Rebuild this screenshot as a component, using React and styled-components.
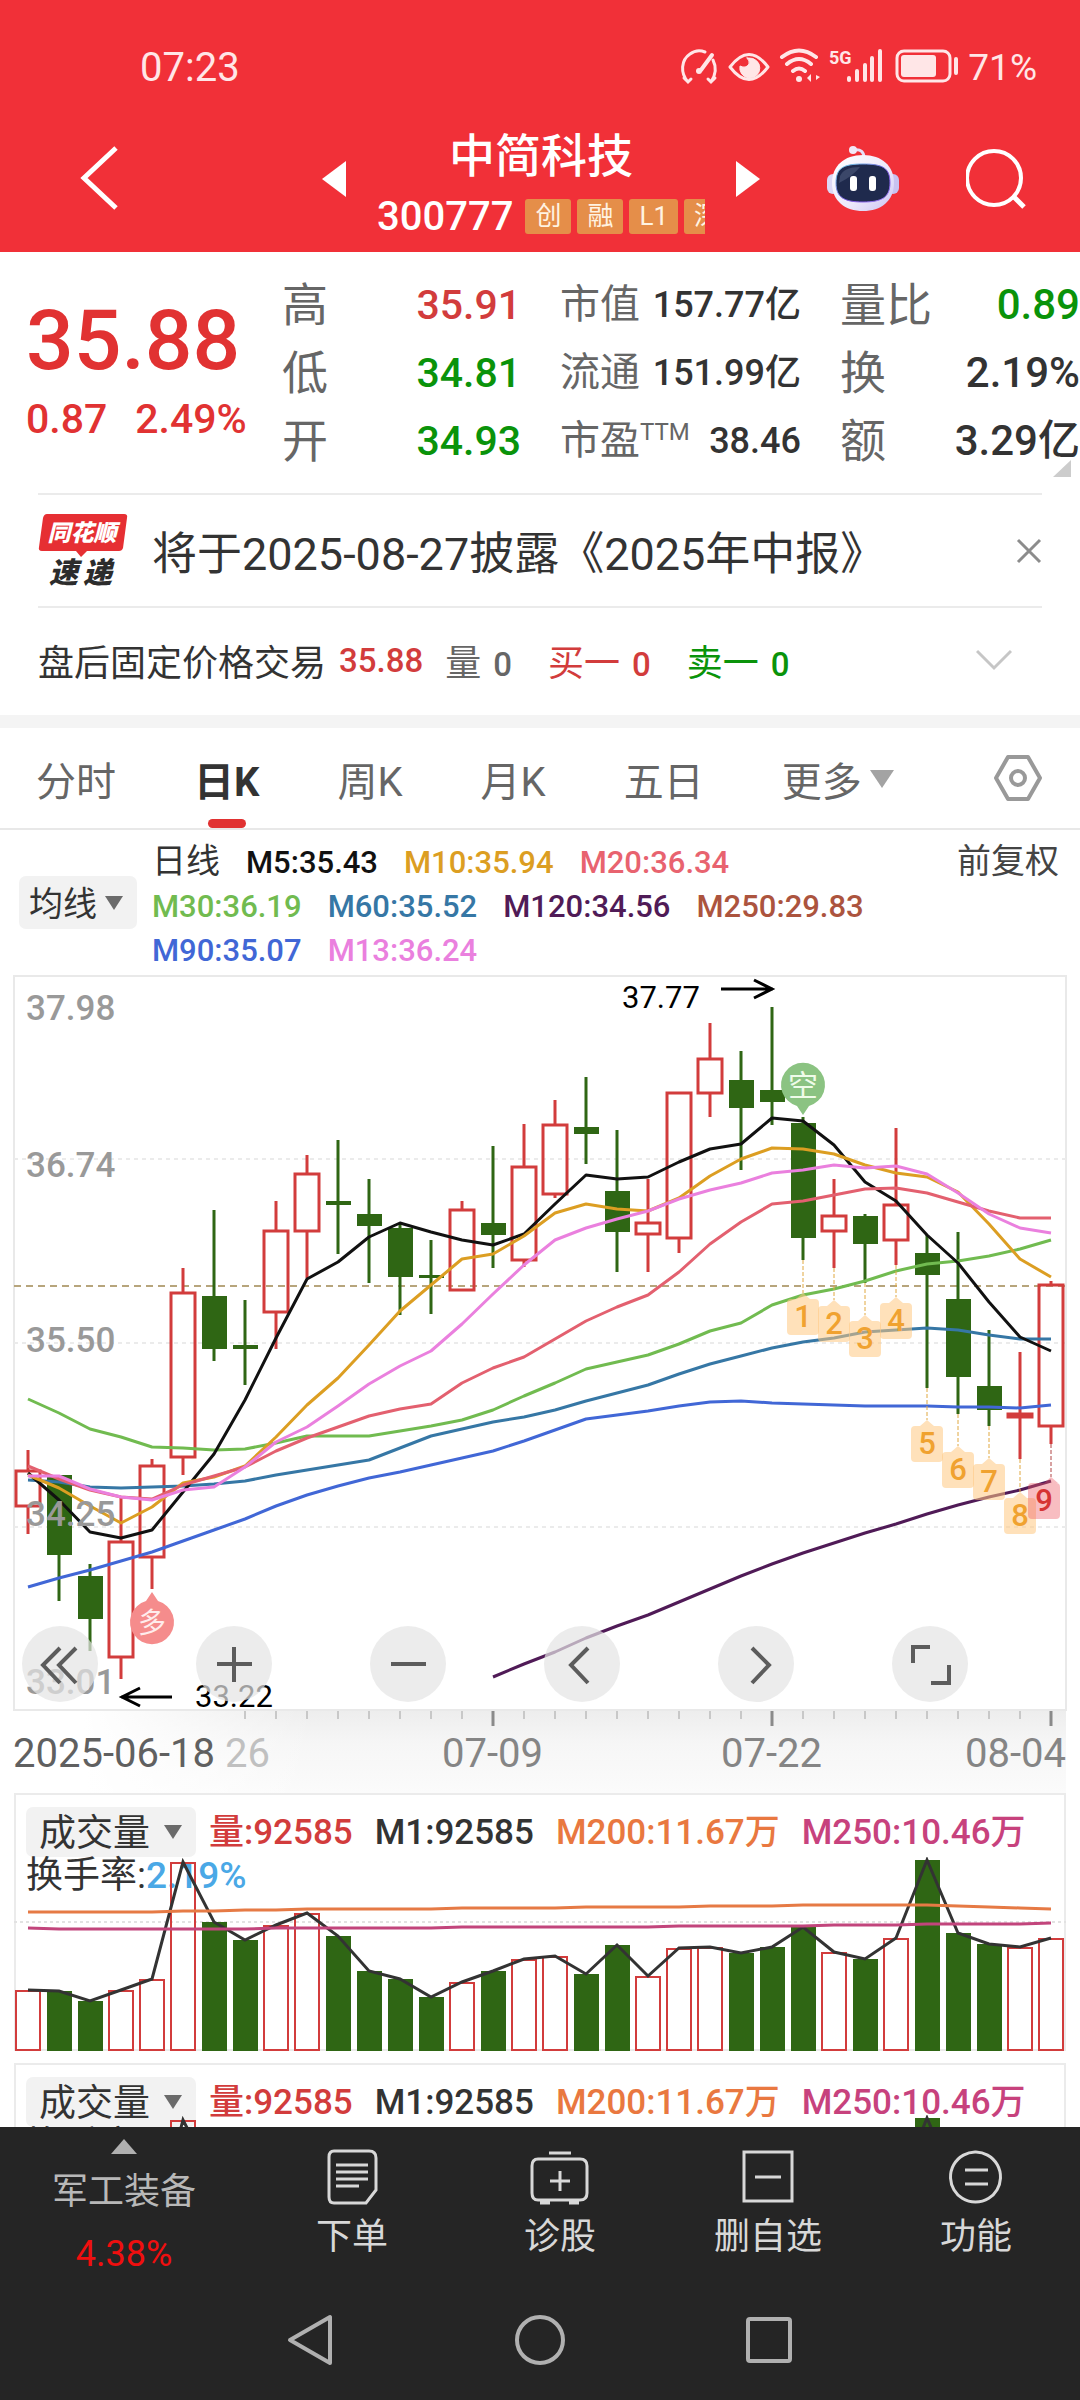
import React, { useState } from "react";

import styled, { createGlobalStyle, css } from "styled-components";

const GlobalStyle = createGlobalStyle`
  * {
    box-sizing: border-box;
  }
  body {
    margin: 0;
    background: #fff;
    color: #333;
    font-family: Roboto, "Noto Sans CJK SC", sans-serif;
  }
  button, select {
    border: 0;
    padding: 0;
    margin: 0;
    background: none;
    color: inherit;
    font: inherit;
    cursor: pointer;
  }
  dl, dd, dt, p, h1, ul {
    margin: 0;
    padding: 0;
    font-weight: inherit;
  }
  svg {
    display: block;
  }
`;

const RED = "#e13232";
const GREEN = "#0a930a";
const UP = "#d23c3c";
const DOWN = "#2f6614";

const Screen = styled.div`
  display: flex;
  flex-direction: column;
  height: 100vh;
  overflow: hidden;
`;

const Header = styled.header`
  flex: none;
  background: #f13038;
  color: #fff;
`;

const StatusBar = styled.div`
  display: flex;
  justify-content: space-between;
  align-items: center;
  height: 112px;
  padding: 22px 43px 0 140px;
  color: #ffe6e7;
  font-size: 40px;
`;

const StatusIcons = styled.div`
  display: flex;
  align-items: center;
  gap: 8px;
  font-size: 37px;
`;

const TitleBar = styled.div`
  display: flex;
  align-items: center;
  gap: 67px;
  height: 140px;
  padding: 0 54px 6px 80px;
`;

const Switcher = styled.div`
  display: flex;
  align-items: center;
  gap: 31px;
  margin-left: auto;
`;

const Stock = styled.div`
  width: 328px;
  padding-top: 12px;
  overflow: hidden;
  h1 {
    font-size: 46px;
    font-weight: 500;
    line-height: 54px;
    margin-bottom: 8px;
    text-align: center;
  }
`;

const StockCode = styled.div`
  display: flex;
  align-items: center;
  gap: 6px;
  height: 50px;
  font-size: 40px;
  font-weight: 500;
  span {
    margin-right: 6px;
  }
`;

const Tag = styled.b`
  flex: none;
  padding: 0 10px;
  border-radius: 3px;
  background: #e58e49;
  color: #fff3e2;
  font-size: 26px;
  font-weight: 400;
  line-height: 35px;
`;

const Content = styled.main`
  flex: 1;
  min-height: 0;
  overflow: hidden;
`;

const Quote = styled.section`
  position: relative;
  display: grid;
  grid-template-columns: minmax(0, 217fr) 239fr 241fr 240fr;
  column-gap: 39px;
  padding: 19px 0 18px 26px;
  white-space: nowrap;
`;

const Price = styled.div`
  padding-top: 24px;
  color: ${RED};
  font-weight: 500;
  strong {
    display: block;
    font-size: 84px;
    font-weight: 500;
    line-height: 92px;
    margin-bottom: 4px;
  }
  p {
    display: flex;
    gap: 28px;
    font-size: 41px;
    line-height: 56px;
  }
`;

const Stats = styled.dl`
  font-size: ${(p) => p.$size}px;
  div {
    display: flex;
    justify-content: space-between;
    line-height: 68px;
  }
  dt {
    color: #666;
    font-size: ${(p) => (p.$small ? 40 : 46)}px;
  }
  dd {
    font-weight: 500;
  }
  sup {
    font-size: 24px;
    line-height: 24px;
  }
`;

const Corner = styled.i`
  position: absolute;
  right: 9px;
  bottom: 16px;
  border-left: 18px solid transparent;
  border-bottom: 17px solid #ccc;
`;

const News = styled.section`
  display: flex;
  align-items: center;
  height: 115px;
  margin: 0 38px;
  border: solid #ebebeb;
  border-width: 2px 0;
  font-size: 45px;
  p {
    flex: 1;
    padding-left: 24px;
    white-space: nowrap;
  }
`;

const AfterHours = styled.section`
  display: flex;
  align-items: center;
  height: 107px;
  padding: 0 68px 3px 38px;
  font-size: 36px;
  button {
    margin-left: auto;
  }
`;

const Deal = styled.span`
  color: ${(p) => p.$color};
  margin-left: ${(p) => p.$gap}px;
  word-break: keep-all;
  b {
    font-size: 33px;
    font-weight: 500;
    margin-left: ${(p) => (p.$bare ? 0 : 12)}px;
  }
`;

const Divider = styled.div`
  height: 13px;
  background: #f4f4f4;
`;

const Tabs = styled.nav`
  display: flex;
  align-items: center;
  gap: 78px;
  height: 102px;
  padding: 0 38px 0 36px;
  border-bottom: 2px solid #e8e8e8;
`;

const Tab = styled.button`
  position: relative;
  display: flex;
  align-items: center;
  gap: 8px;
  height: 100%;
  padding-top: 2px;
  color: #666;
  font-size: 40px;
  ${(p) =>
    p.$active &&
    css`
      color: #333;
      font-weight: 700;
      &::after {
        content: "";
        position: absolute;
        left: 50%;
        bottom: 0;
        width: 38px;
        height: 9px;
        margin-left: -19px;
        border-radius: 5px;
        background: ${RED};
      }
    `}
`;

const SettingsButton = styled.button`
  margin-left: auto;
`;

const Averages = styled.section`
  display: flex;
  align-items: center;
  padding: 9px 21px 3px 19px;
  font-size: 34px;
  label {
    margin-bottom: 7px;
  }
`;

const AverageList = styled.ul`
  flex: 1;
  display: flex;
  flex-wrap: wrap;
  align-items: baseline;
  column-gap: 26px;
  padding: 0 74px 0 15px;
  font-size: 31px;
  line-height: 44px;
  list-style: none;
  li:first-child {
    font-size: 34px;
    font-weight: 400;
  }
`;

const Legend = styled.li`
  color: ${(p) => p.$color};
  font-weight: 500;
`;

const Adjust = styled.button`
  align-self: flex-start;
  color: #444;
  line-height: 44px;
`;

const Picker = styled.label`
  position: relative;
  display: block;
  flex: none;
  width: ${(p) => p.$width}px;
  border-radius: 7px;
  background: #f2f2f2;
  select {
    display: block;
    width: 100%;
    height: ${(p) => p.$height}px;
    padding: 2px 0 0 ${(p) => p.$pad}px;
    appearance: none;
    outline: none;
    font-size: ${(p) => p.$size}px;
  }
  svg {
    position: absolute;
    right: 14px;
    top: 50%;
    margin-top: -7px;
    pointer-events: none;
  }
`;

const ChartArea = styled.section`
  position: relative;
  padding: 0 14px;
  > svg {
    width: 100%;
    height: auto;
    overflow: visible;
  }
`;

const ChartTools = styled.div`
  position: absolute;
  top: 650px;
  left: 22px;
  display: flex;
  gap: 98px;
`;

const RoundButton = styled.button`
  width: 76px;
  height: 76px;
  border-radius: 50%;
  background: rgba(228, 228, 228, 0.7);
`;

const Axis = styled.div`
  margin: 0 14px;
  background: linear-gradient(90deg, #fff 70px, rgba(255, 255, 255, 0) 300px),
    linear-gradient(#ededed, #f6f6f6 40%, #fbfbfb);
  svg {
    width: 100%;
    height: auto;
  }
`;

const VolumePanel = styled.section`
  margin: 0 14px 12px;
  border: 2px solid #ebebeb;
  border-bottom: 0;
`;

const VolumeHead = styled.div`
  display: flex;
  align-items: center;
  padding: 12px 10px 0;
  ul {
    display: flex;
    align-items: baseline;
    gap: 22px;
    padding: 2px 0 0 13px;
    list-style: none;
    font-size: 35px;
    line-height: 48px;
    white-space: nowrap;
  }
`;

const VolumePlot = styled.div`
  position: relative;
  margin: ${(p) => (p.$tight ? -12 : 0)}px -2px 0;
  > svg {
    position: relative;
    width: 100%;
    height: auto;
  }
`;

const Turnover = styled.p`
  position: absolute;
  top: ${(p) => (p.$tight ? 9 : -3)}px;
  left: 12px;
  font-size: 37px;
  line-height: 44px;
  span {
    color: #4aa8e6;
    font-weight: 500;
  }
`;

const BottomBar = styled.footer`
  flex: none;
  background: #252525;
  color: #d8d8d8;
  font-size: 36px;
`;

const Actions = styled.div`
  display: grid;
  grid-template-columns: 248fr 208fr 208fr 208fr 208fr;
  height: 153px;
`;

const Sector = styled.button`
  display: flex;
  flex-direction: column;
  align-items: center;
  padding-top: 12px;
  color: #b8b8b8;
  font-size: 36px;
  line-height: 62px;
  svg {
    margin-bottom: 7px;
  }
  span + span {
    color: #f00f0f;
  }
`;

const Action = styled.button`
  display: flex;
  flex-direction: column;
  align-items: center;
  gap: 10px;
  padding-top: 22px;
  line-height: 44px;
`;

const SystemNav = styled.div`
  display: flex;
  justify-content: center;
  align-items: center;
  gap: 181px;
  height: 120px;
  padding-right: 2px;
`;

// y offsets from the top of the plot: up?, high, body top, body bottom, low
const candles = [
  [1, 474, 494, 531, 558], [0, 499, 499, 579, 625], [0, 588, 600, 643, 675],
  [1, 522, 565, 682, 703], [1, 483, 489, 582, 613], [1, 292, 316, 482, 499],
  [0, 234, 320, 373, 385], [0, 324, 369, 373, 409], [1, 225, 254, 337, 373],
  [1, 179, 197, 256, 302], [0, 164, 225, 229, 278], [0, 203, 238, 250, 307],
  [0, 247, 252, 301, 339], [0, 264, 299, 302, 338], [1, 225, 233, 315, 315],
  [0, 170, 247, 259, 292], [1, 148, 190, 285, 291], [1, 124, 148, 219, 222],
  [0, 101, 151, 158, 188], [0, 154, 215, 256, 296], [1, 203, 246, 259, 296],
  [1, 116, 116, 263, 277], [1, 47, 82, 118, 141], [0, 75, 104, 132, 194],
  [0, 31, 114, 126, 149], [0, 141, 147, 262, 284], [1, 203, 239, 256, 292],
  [0, 238, 240, 268, 307], [1, 152, 228, 265, 289], [0, 259, 277, 299, 412],
  [0, 256, 323, 401, 438], [0, 354, 410, 434, 450], [1, 376, 437, 442, 483],
  [1, 305, 308, 451, 468],
];

const averages = [
  { color: "#71bb50", y: [423, 437, 453, 461, 471, 472, 474, 473, 467, 460, 460, 460, 455, 450, 444, 434, 420, 407, 393, 386, 379, 368, 355, 347, 329, 319, 313, 305, 295, 288, 285, 280, 273, 264] },
  { color: "#3677a5", y: [504, 506, 511, 512, 511, 510, 508, 505, 499, 494, 489, 484, 472, 460, 453, 446, 441, 434, 425, 417, 409, 398, 388, 380, 372, 366, 362, 356, 354, 352, 354, 359, 363, 363] },
  { color: "#111", y: [497, 524, 556, 562, 554, 516, 478, 424, 362, 303, 286, 261, 247, 256, 264, 269, 258, 228, 199, 203, 201, 186, 173, 168, 142, 145, 169, 206, 225, 259, 287, 326, 361, 375] },
  { color: "#dc9e22", y: [499, 512, 530, 547, 531, 507, 501, 490, 461, 429, 402, 369, 335, 309, 283, 278, 260, 237, 228, 233, 235, 222, 200, 183, 172, 173, 178, 189, 197, 201, 216, 248, 283, 301] },
  { color: "#e3606f", y: [490, 503, 514, 521, 523, 509, 500, 491, 475, 462, 451, 440, 433, 428, 407, 392, 381, 363, 345, 331, 319, 296, 268, 246, 228, 225, 219, 213, 212, 217, 226, 235, 242, 242] },
  { color: "#4167d6", y: [611, 602, 594, 585, 576, 565, 554, 543, 530, 519, 510, 502, 496, 489, 482, 475, 465, 454, 443, 439, 435, 430, 426, 425, 427, 428, 429, 430, 430, 430, 431, 431, 432, 429] },
  { color: "#ea80de", y: [500, 500, 513, 521, 524, 514, 511, 491, 466, 451, 430, 408, 390, 375, 348, 318, 289, 264, 252, 243, 235, 223, 214, 207, 197, 194, 189, 192, 190, 198, 217, 238, 252, 257] },
  { color: "#501b57", from: 15, y: [701, 688, 676, 662, 650, 639, 626, 613, 600, 588, 577, 567, 557, 548, 538, 529, 521, 514, 505] },
];

const priceLabels = [
  ["37.98", 44],
  ["36.74", 201],
  ["35.50", 376],
  ["34.25", 550],
  ["33.01", 718],
];

const counts = [
  [25, 317], [26, 324], [27, 339], [28, 321], [29, 444], [30, 470], [31, 482], [32, 516], [33, 501],
];

const volumes = [
  133, 134, 144, 133, 122, 5, 65, 83, 68, 56, 79, 114, 122, 140, 125, 114, 102,
  99, 117, 88, 119, 91, 90, 96, 90, 70, 95, 102, 81, 3, 76, 87, 90, 81,
];
const volume200 = [
  55, 55, 55, 55, 55, 54, 54, 53, 53, 52, 52, 52, 52, 52, 51, 51, 51, 51, 50,
  50, 50, 50, 49, 49, 49, 48, 48, 48, 48, 48, 49, 50, 51, 52,
];
const volume250 = [
  71, 72, 72, 72, 72, 72, 72, 72, 71, 71, 71, 71, 71, 71, 70, 70, 70, 70, 70,
  70, 70, 69, 69, 69, 69, 69, 68, 68, 68, 67, 67, 67, 67, 66,
];

const xAt = (i) => 14 + i * 31;
const toPoints = (ys, from = 0) =>
  ys.map((y, i) => `${xAt(i + from)},${y}`).join(" ");

const Candle = ({ i, data: [up, high, top, bottom, low] }) => {
  const x = xAt(i);
  const color = up ? UP : DOWN;
  return (
    <g stroke={color} strokeWidth="3" fill="none">
      <path d={`M${x} ${high}V${top}M${x} ${bottom}V${low}`} />
      {up ? (
        <rect x={x - 12} y={top + 1} width="24" height={Math.max(bottom - top - 2, 2)} />
      ) : (
        <rect x={x - 12} y={top} width="25" height={bottom - top} fill={color} stroke="none" />
      )}
    </g>
  );
};

const CountMark = ({ i, tip, n }) => {
  const last = n === 9;
  const x = last ? xAt(i) - 7 : xAt(i);
  const color = last ? "#d63434" : "#f0a230";
  return (
    <g>
      <path d={`M${xAt(i)} ${candles[i][4]}V${tip}`} stroke={last ? "#b04444" : "#e0a840"} strokeDasharray="4 2" />
      <path
        d={`M${xAt(i) - 7} ${tip + 6}l7 -6l7 6H${x + 12}q4 0 4 4v28q0 4 -4 4H${x - 12}q-4 0 -4 -4v-28q0 -4 4 -4z`}
        fill={last ? "rgba(238,90,100,0.4)" : "rgba(255,200,130,0.55)"}
      />
      <text x={x} y={tip + 34} textAnchor="middle" fontSize="31" fontWeight="500" fill={color}>
        {n}
      </text>
    </g>
  );
};

const CandleChart = () => (
  <svg viewBox="0 0 1052 734" role="img" aria-label="日K线">
    <rect x="0" y="0" width="1052" height="734" fill="none" stroke="#e9e9e9" strokeWidth="2" />
    <path d="M0 183H1052M0 367H1052M0 551H1052" stroke="#ebebeb" strokeWidth="2" strokeDasharray="4 4" />
    <path d="M0 310H1052" stroke="#b7a57c" strokeWidth="2" strokeDasharray="7 5" />
    {candles.map((data, i) => (
      <Candle key={i} i={i} data={data} />
    ))}
    {averages.map((line) => (
      <polyline
        key={line.color}
        points={toPoints(line.y, line.from)}
        fill="none"
        stroke={line.color}
        strokeWidth="3"
        strokeLinejoin="round"
      />
    ))}
    {priceLabels.map(([text, y]) => (
      <text key={text} x="12" y={y} fontSize="35" fontWeight="500" fill="#999">
        {text}
      </text>
    ))}
    <g fontSize="31" fill="#000">
      <text x="608" y="32">37.77</text>
      <text x="181" y="731">33.22</text>
    </g>
    <path
      d="M707 13H759M740 4L758 13L740 22M158 721H107M126 712L108 721L126 730"
      fill="none"
      stroke="#000"
      strokeWidth="3"
    />
    {counts.map(([i, tip], n) => (
      <CountMark key={i} i={i} tip={tip} n={n + 1} />
    ))}
    <path d="M789 139L783 130A22 22 0 1 1 795 130Z" fill="#8bc382" />
    <text x="789" y="120" textAnchor="middle" fontSize="30" fill="#effbe9">空</text>
    <path d="M138 616L132 625A22 22 0 1 0 144 625Z" fill="#f58c8c" />
    <text x="138" y="657" textAnchor="middle" fontSize="28" fill="#ffecec">多</text>
  </svg>
);

const DateAxis = () => (
  <svg viewBox="0 0 1052 83" fontSize="40" fill="#858585">
    {candles.map((_, i) => {
      if (i < 7) return null;
      const major = i % 9 === 6;
      return (
        <path
          key={i}
          d={`M${xAt(i)} 0v${major ? 16 : 9}`}
          stroke={major ? "#8a8a8a" : "#c8c8c8"}
          strokeWidth={major ? 3 : 2}
        />
      );
    })}
    <text x="-1" y="57" fill="#606060">2025-06-18</text>
    <text x="211" y="57" fill="#c0c0c0">26</text>
    <text x="428" y="57">07-09</text>
    <text x="707" y="57">07-22</text>
    <text x="1052" y="57" textAnchor="end">08-04</text>
  </svg>
);

const VolumeChart = () => (
  <svg viewBox="0 0 1052 194" role="img" aria-label="成交量图">
    <path d="M0 65H1052" stroke="#e2e2e2" strokeWidth="2" strokeDasharray="3 3" />
    <path d="M0 193H1052" stroke="#ebebeb" strokeWidth="2" />
    {volumes.map((y, i) =>
      candles[i][0] ? (
        <rect key={i} x={xAt(i) - 12} y={y + 1} width="24" height={192 - y} fill="none" stroke={UP} strokeWidth="2" />
      ) : (
        <rect key={i} x={xAt(i) - 12} y={y} width="25" height={194 - y} fill={DOWN} />
      )
    )}
    <g fill="none">
      <polyline points={toPoints(volumes)} stroke="#333" strokeWidth="3" />
      <polyline points={toPoints(volume200)} stroke="#e67a45" strokeWidth="3" />
      <polyline points={toPoints(volume250)} stroke="#c2457c" strokeWidth="3" />
    </g>
  </svg>
);

const Triangle = ({ d, width, height, fill }) => (
  <svg width={width} height={height} viewBox={`0 0 ${width} ${height}`}>
    <path d={d} fill={fill} />
  </svg>
);

const Dropdown = ({ name, ...rest }) => (
  <Picker {...rest}>
    <select aria-label={name} defaultValue={name}>
      <option>{name}</option>
    </select>
    <Triangle d="M0 0H18L9 14Z" width={18} height={14} fill="#6b6b6b" />
  </Picker>
);

const Volume = ({ tight }) => (
  <VolumePanel>
    <VolumeHead>
      <Dropdown name="成交量" $width={170} $height={50} $pad={13} $size={37} />
      <ul>
        <Legend $color={UP}>量:92585</Legend>
        <Legend $color="#333">M1:92585</Legend>
        <Legend $color="#e97840">M200:11.67万</Legend>
        <Legend $color="#c7427d">M250:10.46万</Legend>
      </ul>
    </VolumeHead>
    <VolumePlot $tight={tight}>
      <Turnover $tight={tight}>
        换手率:<span>2.19%</span>
      </Turnover>
      <VolumeChart />
    </VolumePlot>
  </VolumePanel>
);

const PhoneIcons = () => (
  <svg width="280" height="40" viewBox="0 0 280 40" fill="none" stroke="#ffe6e7" strokeWidth="3" strokeLinecap="round">
    <path d="M8 35C0 26 1 13 10 7C14 4 20 3 25 5M33 13C37 21 35 29 31 35M4 31L8 35L11 32M35 31L31 35L28 32" />
    <path d="M32 8L21 23" strokeWidth="4" />
    <circle cx="19" cy="24" r="3" fill="#ffe6e7" stroke="none" />
    <path d="M50 20Q69 -5 88 20Q69 45 50 20Z" strokeLinejoin="round" />
    <path d="M69 11A10 10 0 1 1 60 19Q66 22 69 17Q70 14 67 11Z" fill="#ffe6e7" strokeWidth="1" />
    <path d="M102 10Q119 -3 136 10M107 17Q119 7 131 17M113 24Q119 19 125 24" strokeWidth="4" />
    <circle cx="119" cy="32" r="3" fill="#ffe6e7" stroke="none" />
    <path d="M131 27V35L127 31ZM134 27V35M136 28L140 30L136 33Z" fill="#ffe6e7" stroke="none" />
    <text x="149" y="17" fontSize="18" fontWeight="700" fill="#ffe6e7" stroke="none">5G</text>
    <path d="M169 31V33M177 24V33M185 18V33M192 11V33M200 4V33" strokeWidth="4" />
    <rect x="217" y="4" width="53" height="30" rx="7" />
    <rect x="221" y="8" width="35" height="22" rx="3" fill="#ffe6e7" stroke="none" />
    <path d="M276 12V26" strokeWidth="4" />
  </svg>
);

const Robot = () => (
  <svg width="72" height="68" viewBox="0 0 72 68">
    <defs>
      <linearGradient id="shell" x1="0" y1="0" x2="1" y2="1">
        <stop offset="0" stopColor="#ffffff" />
        <stop offset="0.6" stopColor="#ece8fb" />
        <stop offset="1" stopColor="#c9c3f2" />
      </linearGradient>
      <linearGradient id="rim" x1="0" y1="0" x2="1" y2="1">
        <stop offset="0" stopColor="#6fd8e8" />
        <stop offset="0.6" stopColor="#7b52e0" />
        <stop offset="1" stopColor="#9a7cf5" />
      </linearGradient>
    </defs>
    <path d="M27 5C34 4 37 7 37 13" fill="none" stroke="#e6dff8" strokeWidth="3" />
    <circle cx="26" cy="5" r="4" fill="#f2e8f8" />
    <rect x="0" y="29" width="12" height="20" rx="6" fill="#dcd8f6" />
    <rect x="60" y="29" width="12" height="20" rx="6" fill="#c8c2f0" />
    <path d="M36 10C55 10 67 21 67 38C67 56 54 66 36 66C18 66 5 56 5 38C5 21 17 10 36 10Z" fill="url(#shell)" />
    <path d="M36 19C56 19 63 23 63 38C63 53 54 57 36 57C18 57 9 53 9 38C9 23 16 19 36 19Z" fill="#1f2a4d" stroke="url(#rim)" strokeWidth="1" />
    <path d="M13 31Q17 22 33 22Q26 31 12 38Z" fill="#3b4769" />
    <rect x="23" y="31" width="7" height="15" rx="3" fill="#fff" />
    <rect x="42" y="31" width="7" height="15" rx="3" fill="#fff" />
  </svg>
);

const NewsLogo = () => (
  <svg width="90" height="74" viewBox="0 0 90 74" fontStyle="italic" fontWeight="900">
    <path d="M9 0H86Q90 0 89 4L85 34Q84 37 81 37H49L43 43L38 37H4Q0 37 1 33L5 4Q6 0 9 0Z" fill="#e62f33" />
    <text x="44" y="27" textAnchor="middle" fontSize="23" fill="#fff">同花顺</text>
    <text x="11" y="69" fontSize="29" fill="#2c2c2c">速</text>
    <text x="45" y="69" fontSize="29" fill="#2c2c2c">递</text>
  </svg>
);

const toolIcons = [
  ["最早", "M38 22L21 39L38 57M54 22L37 39L54 57"],
  ["放大", "M38 21V56M21 38H56"],
  ["缩小", "M21 38H56"],
  ["左移", "M44 22L27 39L44 57"],
  ["右移", "M34 22L51 39L34 57"],
  ["全屏", "M21 37V21H38M57 39V57H39"],
];

const actions = [
  ["下单", <path key="i" d="M10 2H45Q52 2 52 9V41L42 54H10Q5 54 5 48V8Q5 2 10 2ZM12 16H44M12 23H44M12 30H44M12 37H35" />],
  ["诊股", <path key="i" d="M17 4H39M6 10H48Q55 10 55 17V44Q55 51 48 51H6Q0 51 0 44V17Q0 10 6 10ZM28 22V42M18 32H38M8 54H18M37 54H47" />],
  ["删自选", <path key="i" d="M4 3H52V52H4ZM15 28H41" />],
  ["功能", <path key="i" d="M28 3A25 25 0 1 1 27 3ZM17 21H40M17 35H40" />],
];

const periods = ["分时", "日K", "周K", "月K", "五日"];

const App = () => {
  const [period, setPeriod] = useState("日K");
  const [showNews, setShowNews] = useState(true);

  return (
    <Screen>
      <GlobalStyle />
      <Header>
        <StatusBar>
          <span>07:23</span>
          <StatusIcons>
            <PhoneIcons />
            71%
          </StatusIcons>
        </StatusBar>
        <TitleBar>
          <button aria-label="返回">
            <svg width="40" height="66" viewBox="0 0 40 66" fill="none" stroke="#fff" strokeWidth="5">
              <path d="M36 2L4 32L36 62" />
            </svg>
          </button>
          <Switcher>
            <button aria-label="上一只">
              <Triangle d="M24 0V36L0 18Z" width={24} height={36} fill="#fff" />
            </button>
            <Stock>
              <h1>中简科技</h1>
              <StockCode>
                <span>300777</span>
                <Tag>创</Tag>
                <Tag>融</Tag>
                <Tag>L1</Tag>
                <Tag>深</Tag>
              </StockCode>
            </Stock>
            <button aria-label="下一只">
              <Triangle d="M0 0V36L24 18Z" width={24} height={36} fill="#fff" />
            </button>
          </Switcher>
          <button aria-label="智能助手">
            <Robot />
          </button>
          <button aria-label="搜索">
            <svg width="60" height="60" viewBox="0 0 60 60" fill="none" stroke="#fff" strokeWidth="4">
              <circle cx="28" cy="29" r="27" />
              <path d="M47 47L58 58" strokeWidth="5" />
            </svg>
          </button>
        </TitleBar>
      </Header>

      <Content>
        <Quote>
          <Price>
            <strong>35.88</strong>
            <p>
              <span>0.87</span>
              <span>2.49%</span>
            </p>
          </Price>
          <Stats $size={41}>
            <div style={{ color: UP }}>
              <dt>高</dt>
              <dd>35.91</dd>
            </div>
            <div style={{ color: GREEN }}>
              <dt>低</dt>
              <dd>34.81</dd>
            </div>
            <div style={{ color: GREEN }}>
              <dt>开</dt>
              <dd>34.93</dd>
            </div>
          </Stats>
          <Stats $small $size={36}>
            <div>
              <dt>市值</dt>
              <dd>157.77亿</dd>
            </div>
            <div>
              <dt>流通</dt>
              <dd>151.99亿</dd>
            </div>
            <div>
              <dt>
                市盈<sup>TTM</sup>
              </dt>
              <dd>38.46</dd>
            </div>
          </Stats>
          <Stats $size={42}>
            <div style={{ color: GREEN }}>
              <dt>量比</dt>
              <dd>0.89</dd>
            </div>
            <div>
              <dt>换</dt>
              <dd>2.19%</dd>
            </div>
            <div>
              <dt>额</dt>
              <dd>3.29亿</dd>
            </div>
          </Stats>
          <Corner />
        </Quote>

        {showNews && (
          <News>
            <NewsLogo />
            <p>将于2025-08-27披露《2025年中报》</p>
            <button aria-label="关闭" onClick={() => setShowNews(false)}>
              <svg width="26" height="26" viewBox="0 0 26 26" stroke="#8c8c8c" strokeWidth="3">
                <path d="M2 2L24 24M24 2L2 24" />
              </svg>
            </button>
          </News>
        )}

        <AfterHours>
          盘后固定价格交易
          <Deal $color={UP} $gap={13} $bare>
            <b>35.88</b>
          </Deal>
          <Deal $color="#666" $gap={22}>
            量<b>0</b>
          </Deal>
          <Deal $color={UP} $gap={36}>
            买一<b>0</b>
          </Deal>
          <Deal $color={GREEN} $gap={36}>
            卖一<b>0</b>
          </Deal>
          <button aria-label="展开">
            <svg width="36" height="22" viewBox="0 0 36 22" fill="none" stroke="#c6c6c6" strokeWidth="3">
              <path d="M1 2L18 19L35 2" />
            </svg>
          </button>
        </AfterHours>
        <Divider />

        <Tabs>
          {periods.map((name) => (
            <Tab key={name} $active={name === period} onClick={() => setPeriod(name)}>
              {name}
            </Tab>
          ))}
          <Tab>
            更多
            <Triangle d="M0 0H24L12 18Z" width={24} height={18} fill="#a3a3a3" />
          </Tab>
          <SettingsButton aria-label="设置">
            <svg width="48" height="46" viewBox="0 0 48 46" fill="none" stroke="#999" strokeWidth="4">
              <path d="M14 2H34L46 23L34 44H14L2 23Z" strokeLinejoin="round" />
              <circle cx="24" cy="23" r="7" />
            </svg>
          </SettingsButton>
        </Tabs>

        <Averages>
          <Dropdown name="均线" $width={118} $height={53} $pad={10} $size={34} />
          <AverageList>
            <Legend $color="#333">日线</Legend>
            <Legend $color="#111">M5:35.43</Legend>
            <Legend $color="#dc9e22">M10:35.94</Legend>
            <Legend $color="#e8636f">M20:36.34</Legend>
            <Legend $color="#71bb50">M30:36.19</Legend>
            <Legend $color="#3677a5">M60:35.52</Legend>
            <Legend $color="#501b57">M120:34.56</Legend>
            <Legend $color="#ac543e">M250:29.83</Legend>
            <Legend $color="#4167d6">M90:35.07</Legend>
            <Legend $color="#ea80de">M13:36.24</Legend>
          </AverageList>
          <Adjust>前复权</Adjust>
        </Averages>

        <ChartArea>
          <CandleChart />
          <ChartTools>
            {toolIcons.map(([label, d]) => (
              <RoundButton key={label} aria-label={label}>
                <svg width="76" height="76" viewBox="0 0 76 76" fill="none" stroke="#5c5c5c" strokeWidth="4">
                  <path d={d} />
                </svg>
              </RoundButton>
            ))}
          </ChartTools>
        </ChartArea>
        <Axis>
          <DateAxis />
        </Axis>

        <Volume />
        <Volume tight />
      </Content>

      <BottomBar>
        <Actions>
          <Sector>
            <Triangle d="M0 15H26L13 0Z" width={26} height={15} fill="#b0b0b0" />
            <span>军工装备</span>
            <span>4.38%</span>
          </Sector>
          {actions.map(([label, icon]) => (
            <Action key={label}>
              <svg width="56" height="56" viewBox="0 0 56 56" fill="none" stroke="#d8d8d8" strokeWidth="3" overflow="visible">
                {icon}
              </svg>
              {label}
            </Action>
          ))}
        </Actions>
        <SystemNav>
          <button aria-label="系统返回">
            <svg width="48" height="52" viewBox="0 0 48 52" fill="none" stroke="#b0b0b0" strokeWidth="4" strokeLinejoin="round">
              <path d="M44 3V49L4 26Z" />
            </svg>
          </button>
          <button aria-label="主页">
            <svg width="50" height="50" viewBox="0 0 50 50" fill="none" stroke="#b0b0b0" strokeWidth="4">
              <circle cx="25" cy="25" r="23" />
            </svg>
          </button>
          <button aria-label="最近任务">
            <svg width="46" height="46" viewBox="0 0 46 46" fill="none" stroke="#b0b0b0" strokeWidth="4">
              <rect x="2" y="2" width="42" height="42" rx="2" />
            </svg>
          </button>
        </SystemNav>
      </BottomBar>
    </Screen>
  );
};

export default App;
